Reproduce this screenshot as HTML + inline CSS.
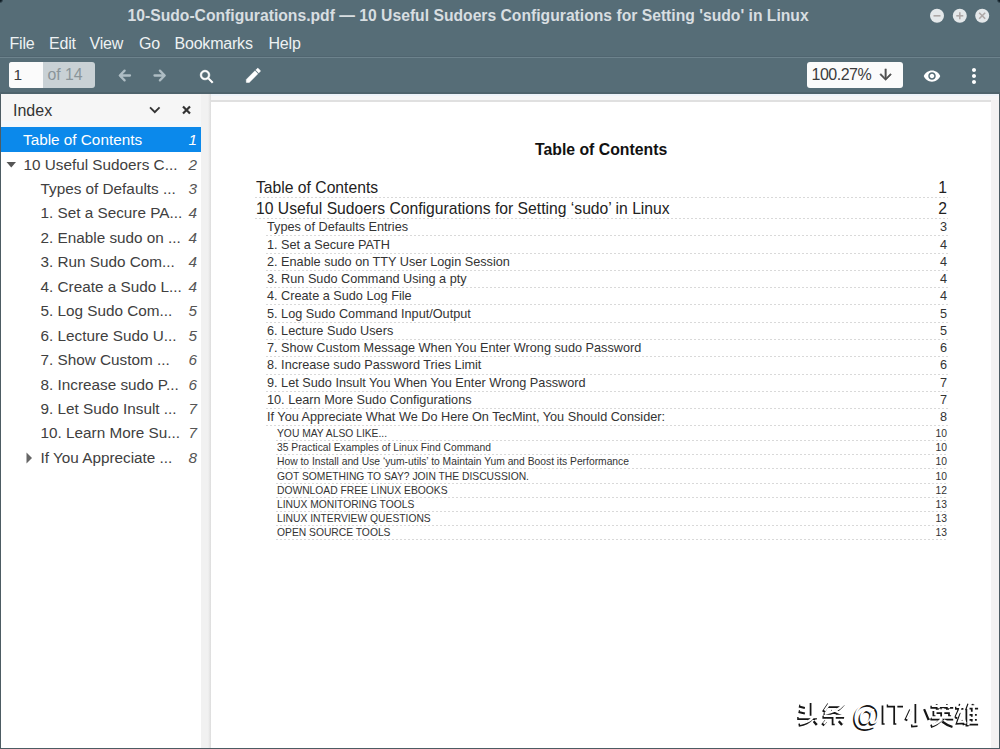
<!DOCTYPE html>
<html><head><meta charset="utf-8"><style>
*{margin:0;padding:0;box-sizing:border-box}
html,body{width:1000px;height:749px;overflow:hidden;background:#566d77}
body{position:relative;font-family:"Liberation Sans",sans-serif}
.a{position:absolute}
.l{position:absolute;white-space:nowrap;line-height:1}
.l.r{width:200px;text-align:right}
.dots{position:absolute;height:1px;background-image:linear-gradient(to right,#d9d9d9 50%,transparent 50%);background-size:4px 1px}
svg{position:absolute;overflow:visible}
</style></head><body>
<div class="a" style="left:0;top:0;width:1000px;height:94px;background:#566d77"></div>
<div class="a" style="left:0;top:56px;width:1000px;height:1px;background:#506570"></div>
<div class="a" style="left:0;top:57px;width:1000px;height:1px;background:#6d838d"></div>
<div class="a" style="left:0;top:92px;width:1000px;height:2px;background:#4e636c"></div>
<div class="l" style="left:127.5px;top:8.01px;font-size:15.7px;color:#d8dee1;font-weight:bold">10-Sudo-Configurations.pdf — 10 Useful Sudoers Configurations for Setting 'sudo' in Linux</div>
<svg style="left:0;top:0" width="1000" height="30"><circle cx="937" cy="15.8" r="7" fill="#e4e8ea"/><line x1="933.5" y1="15.8" x2="940.5" y2="15.8" stroke="#aea8a7" stroke-width="1.6"/><circle cx="959.8" cy="15.8" r="7" fill="#e4e8ea"/><line x1="956.3" y1="15.8" x2="963.3" y2="15.8" stroke="#aea8a7" stroke-width="1.6"/><line x1="959.8" y1="12.3" x2="959.8" y2="19.3" stroke="#aea8a7" stroke-width="1.6"/><circle cx="982.2" cy="15.8" r="7" fill="#e4e8ea"/><line x1="979.2" y1="12.8" x2="985.2" y2="18.8" stroke="#aea8a7" stroke-width="1.6"/><line x1="979.2" y1="18.8" x2="985.2" y2="12.8" stroke="#aea8a7" stroke-width="1.6"/></svg>
<div class="l" style="left:9.5px;top:36.36px;font-size:16px;color:#eef2f3;letter-spacing:-0.2px">File</div>
<div class="l" style="left:49px;top:36.36px;font-size:16px;color:#eef2f3;letter-spacing:-0.2px">Edit</div>
<div class="l" style="left:89.5px;top:36.36px;font-size:16px;color:#eef2f3;letter-spacing:-0.2px">View</div>
<div class="l" style="left:139px;top:36.36px;font-size:16px;color:#eef2f3;letter-spacing:-0.2px">Go</div>
<div class="l" style="left:174.5px;top:36.36px;font-size:16px;color:#eef2f3;letter-spacing:-0.2px">Bookmarks</div>
<div class="l" style="left:268.5px;top:36.36px;font-size:16px;color:#eef2f3;letter-spacing:-0.2px">Help</div>
<div class="a" style="left:9px;top:62px;width:86px;height:26px;border-radius:3px;background:#c9d1d5;overflow:hidden"><div class="a" style="left:0;top:0;width:34px;height:26px;background:#fbfbfb"></div></div>
<div class="l" style="left:13.5px;top:66.88px;font-size:15.5px;color:#3a3a3a;">1</div>
<div class="l" style="left:47.5px;top:66.63px;font-size:15.8px;color:#8a959a;">of 14</div>
<svg style="left:0;top:0" width="300" height="94"><path d="M120 75.5 L130 75.5 M124.6 70.6 L119.8 75.5 L124.6 80.4 M154.5 75.5 L164.5 75.5 M159.9 70.6 L164.7 75.5 L159.9 80.4" stroke="#aebdc4" stroke-width="2.3" fill="none" stroke-linecap="round" stroke-linejoin="round"/></svg>
<svg style="left:198.1px;top:67.56px" width="17.759999999999998" height="17.759999999999998" viewBox="0 0 24 24"><path d="M15.5 14h-.79l-.28-.27C15.41 12.59 16 11.11 16 9.5 16 5.91 13.09 3 9.5 3S3 5.91 3 9.5 5.91 16 9.5 16c1.61 0 3.09-.59 4.23-1.57l.27.28v.79l5 4.99L20.49 19l-4.99-5zm-6 0C7.01 14 5 11.99 5 9.5S7.01 5 9.5 5 14 7.01 14 9.5 11.99 14 9.5 14z" fill="#ffffff" stroke="#ffffff" stroke-width="0.9" stroke-linejoin="round"/></svg>
<svg style="left:244.4px;top:65.9px" width="18.72" height="18.72" viewBox="0 0 24 24"><path d="M3 17.25V21h3.75L17.81 9.94l-3.75-3.75L3 17.25zM20.71 7.04c.39-.39.39-1.02 0-1.41l-2.34-2.34c-.39-.39-1.02-.39-1.41 0l-1.83 1.83 3.75 3.75 1.83-1.83z" fill="#ffffff" stroke="#ffffff" stroke-width="0.7" stroke-linejoin="round"/></svg>
<div class="a" style="left:807px;top:62px;width:96px;height:26px;border-radius:3px;background:#fbfbfb"></div>
<div class="l" style="left:811.5px;top:67.46px;font-size:16px;color:#3c3c3c;letter-spacing:-0.5px">100.27%</div>
<svg style="left:876.6px;top:65.6px" width="17.28" height="17.28" viewBox="0 0 24 24"><path d="M20 12l-1.41-1.41L13 16.17V4h-2v12.17l-5.58-5.59L4 12l8 8 8-8z" fill="#505050" stroke="#505050" stroke-width="0.7" stroke-linejoin="round"/></svg>
<svg style="left:923.3px;top:66.5px" width="18.0" height="18.0" viewBox="0 0 24 24"><path d="M12 4.5C7 4.5 2.73 7.61 1 12c1.73 4.39 6 7.5 11 7.5s9.27-3.11 11-7.5c-1.73-4.39-6-7.5-11-7.5zM12 17c-2.76 0-5-2.24-5-5s2.24-5 5-5 5 2.24 5 5-2.24 5-5 5zm0-8c-1.66 0-3 1.34-3 3s1.34 3 3 3 3-1.34 3-3-1.34-3-3-3z" fill="#ffffff"/></svg>
<svg style="left:961.5px;top:63.5px" width="24.0" height="24.0" viewBox="0 0 24 24"><path d="M12 8c1.1 0 2-.9 2-2s-.9-2-2-2-2 .9-2 2 .9 2 2 2zm0 2c-1.1 0-2 .9-2 2s.9 2 2 2 2-.9 2-2-.9-2-2-2zm0 6c-1.1 0-2 .9-2 2s.9 2 2 2 2-.9 2-2-.9-2-2-2z" fill="#ffffff"/></svg>
<div class="a" style="left:201px;top:94px;width:798px;height:655px;background:#f6f6f7"></div>
<div class="a" style="left:201px;top:94px;width:798px;height:2px;background:#eef3f9"></div>
<div class="a" style="left:209px;top:100px;width:782px;height:660px;background:#e0e0e0"></div>
<div class="a" style="left:211px;top:102px;width:780px;height:660px;background:#fff"></div>
<div class="a" style="left:991px;top:100px;width:8px;height:649px;background:#f4f2f2"></div>
<div class="l" style="left:535px;top:142.43px;font-size:15.8px;color:#111;font-weight:bold">Table of Contents</div>
<div class="l" style="left:256px;top:179.71px;font-size:15.7px;color:#222;">Table of Contents</div>
<div class="l r" style="left:747px;top:179.71px;font-size:15.7px;color:#222;">1</div>
<div class="dots" style="left:255px;top:197px;width:693px"></div>
<div class="l" style="left:256px;top:200.91px;font-size:15.7px;color:#222;">10 Useful Sudoers Configurations for Setting ‘sudo’ in Linux</div>
<div class="l r" style="left:747px;top:200.91px;font-size:15.7px;color:#222;">2</div>
<div class="dots" style="left:255px;top:218px;width:693px"></div>
<div class="l" style="left:267px;top:221.25px;font-size:12.7px;color:#333;">Types of Defaults Entries</div>
<div class="l r" style="left:747px;top:221.25px;font-size:12.7px;color:#333;">3</div>
<div class="dots" style="left:266px;top:235px;width:682px"></div>
<div class="l" style="left:267px;top:238.52px;font-size:12.7px;color:#333;">1. Set a Secure PATH</div>
<div class="l r" style="left:747px;top:238.52px;font-size:12.7px;color:#333;">4</div>
<div class="dots" style="left:266px;top:253px;width:682px"></div>
<div class="l" style="left:267px;top:255.79px;font-size:12.7px;color:#333;">2. Enable sudo on TTY User Login Session</div>
<div class="l r" style="left:747px;top:255.79px;font-size:12.7px;color:#333;">4</div>
<div class="dots" style="left:266px;top:270px;width:682px"></div>
<div class="l" style="left:267px;top:273.06px;font-size:12.7px;color:#333;">3. Run Sudo Command Using a pty</div>
<div class="l r" style="left:747px;top:273.06px;font-size:12.7px;color:#333;">4</div>
<div class="dots" style="left:266px;top:287px;width:682px"></div>
<div class="l" style="left:267px;top:290.33px;font-size:12.7px;color:#333;">4. Create a Sudo Log File</div>
<div class="l r" style="left:747px;top:290.33px;font-size:12.7px;color:#333;">4</div>
<div class="dots" style="left:266px;top:304px;width:682px"></div>
<div class="l" style="left:267px;top:307.60px;font-size:12.7px;color:#333;">5. Log Sudo Command Input/Output</div>
<div class="l r" style="left:747px;top:307.60px;font-size:12.7px;color:#333;">5</div>
<div class="dots" style="left:266px;top:322px;width:682px"></div>
<div class="l" style="left:267px;top:324.87px;font-size:12.7px;color:#333;">6. Lecture Sudo Users</div>
<div class="l r" style="left:747px;top:324.87px;font-size:12.7px;color:#333;">5</div>
<div class="dots" style="left:266px;top:339px;width:682px"></div>
<div class="l" style="left:267px;top:342.14px;font-size:12.7px;color:#333;">7. Show Custom Message When You Enter Wrong sudo Password</div>
<div class="l r" style="left:747px;top:342.14px;font-size:12.7px;color:#333;">6</div>
<div class="dots" style="left:266px;top:356px;width:682px"></div>
<div class="l" style="left:267px;top:359.41px;font-size:12.7px;color:#333;">8. Increase sudo Password Tries Limit</div>
<div class="l r" style="left:747px;top:359.41px;font-size:12.7px;color:#333;">6</div>
<div class="dots" style="left:266px;top:374px;width:682px"></div>
<div class="l" style="left:267px;top:376.68px;font-size:12.7px;color:#333;">9. Let Sudo Insult You When You Enter Wrong Password</div>
<div class="l r" style="left:747px;top:376.68px;font-size:12.7px;color:#333;">7</div>
<div class="dots" style="left:266px;top:391px;width:682px"></div>
<div class="l" style="left:267px;top:393.95px;font-size:12.7px;color:#333;">10. Learn More Sudo Configurations</div>
<div class="l r" style="left:747px;top:393.95px;font-size:12.7px;color:#333;">7</div>
<div class="dots" style="left:266px;top:408px;width:682px"></div>
<div class="l" style="left:267px;top:411.22px;font-size:12.7px;color:#333;">If You Appreciate What We Do Here On TecMint, You Should Consider:</div>
<div class="l r" style="left:747px;top:411.22px;font-size:12.7px;color:#333;">8</div>
<div class="dots" style="left:266px;top:425px;width:682px"></div>
<div class="l" style="left:277px;top:428.98px;font-size:10.3px;color:#333;">YOU MAY ALSO LIKE...</div>
<div class="l r" style="left:747px;top:428.98px;font-size:10.3px;color:#333;">10</div>
<div class="dots" style="left:276px;top:440px;width:672px"></div>
<div class="l" style="left:277px;top:443.18px;font-size:10.3px;color:#333;">35 Practical Examples of Linux Find Command</div>
<div class="l r" style="left:747px;top:443.18px;font-size:10.3px;color:#333;">10</div>
<div class="dots" style="left:276px;top:454px;width:672px"></div>
<div class="l" style="left:277px;top:457.38px;font-size:10.3px;color:#333;">How to Install and Use ‘yum-utils’ to Maintain Yum and Boost its Performance</div>
<div class="l r" style="left:747px;top:457.38px;font-size:10.3px;color:#333;">10</div>
<div class="dots" style="left:276px;top:468px;width:672px"></div>
<div class="l" style="left:277px;top:471.58px;font-size:10.3px;color:#333;">GOT SOMETHING TO SAY? JOIN THE DISCUSSION.</div>
<div class="l r" style="left:747px;top:471.58px;font-size:10.3px;color:#333;">10</div>
<div class="dots" style="left:276px;top:483px;width:672px"></div>
<div class="l" style="left:277px;top:485.78px;font-size:10.3px;color:#333;">DOWNLOAD FREE LINUX EBOOKS</div>
<div class="l r" style="left:747px;top:485.78px;font-size:10.3px;color:#333;">12</div>
<div class="dots" style="left:276px;top:497px;width:672px"></div>
<div class="l" style="left:277px;top:499.98px;font-size:10.3px;color:#333;">LINUX MONITORING TOOLS</div>
<div class="l r" style="left:747px;top:499.98px;font-size:10.3px;color:#333;">13</div>
<div class="dots" style="left:276px;top:511px;width:672px"></div>
<div class="l" style="left:277px;top:514.18px;font-size:10.3px;color:#333;">LINUX INTERVIEW QUESTIONS</div>
<div class="l r" style="left:747px;top:514.18px;font-size:10.3px;color:#333;">13</div>
<div class="dots" style="left:276px;top:525px;width:672px"></div>
<div class="l" style="left:277px;top:528.38px;font-size:10.3px;color:#333;">OPEN SOURCE TOOLS</div>
<div class="l r" style="left:747px;top:528.38px;font-size:10.3px;color:#333;">13</div>
<div class="dots" style="left:276px;top:539px;width:672px"></div>
<div class="a" style="left:1px;top:94px;width:200px;height:654px;background:#fff"></div>
<div class="a" style="left:1px;top:94px;width:200px;height:27px;background:#f6f6f6"></div>
<div class="a" style="left:1px;top:121px;width:200px;height:6px;background:#f3f8fb"></div>
<div class="a" style="left:201px;top:94px;width:10px;height:654px;background:linear-gradient(to right,#f1f1f1 0,#f1f1f1 70%,#dcdcdc 100%)"></div>
<div class="l" style="left:13px;top:102.66px;font-size:16px;color:#333;">Index</div>
<svg style="left:143.8px;top:98.5px" width="21.6" height="21.6" viewBox="0 0 24 24"><path d="M16.59 8.59L12 13.17 7.41 8.59 6 10l6 6 6-6z" fill="#333"/></svg>
<svg style="left:0;top:0" width="200" height="130"><path d="M183 106.5 L190 113.5 M190 106.5 L183 113.5" stroke="#333" stroke-width="2.2" fill="none"/></svg>
<div class="a" style="left:1px;top:127px;width:200px;height:24.7px;background:#0b89eb"></div>
<div class="l" style="left:23px;top:132.05px;font-size:15.3px;color:#ffffff;">Table of Contents</div>
<div class="l r" style="left:-3px;top:132.05px;font-size:15.3px;color:#ffffff;font-style:italic">1</div>
<div class="l" style="left:23.5px;top:156.50px;font-size:15.3px;color:#404040;">10 Useful Sudoers C...</div>
<div class="l r" style="left:-3px;top:156.50px;font-size:15.3px;color:#555555;font-style:italic">2</div>
<div class="l" style="left:40.5px;top:180.95px;font-size:15.3px;color:#404040;">Types of Defaults ...</div>
<div class="l r" style="left:-3px;top:180.95px;font-size:15.3px;color:#555555;font-style:italic">3</div>
<div class="l" style="left:40.5px;top:205.40px;font-size:15.3px;color:#404040;">1. Set a Secure PA...</div>
<div class="l r" style="left:-3px;top:205.40px;font-size:15.3px;color:#555555;font-style:italic">4</div>
<div class="l" style="left:40.5px;top:229.85px;font-size:15.3px;color:#404040;">2. Enable sudo on ...</div>
<div class="l r" style="left:-3px;top:229.85px;font-size:15.3px;color:#555555;font-style:italic">4</div>
<div class="l" style="left:40.5px;top:254.30px;font-size:15.3px;color:#404040;">3. Run Sudo Com...</div>
<div class="l r" style="left:-3px;top:254.30px;font-size:15.3px;color:#555555;font-style:italic">4</div>
<div class="l" style="left:40.5px;top:278.75px;font-size:15.3px;color:#404040;">4. Create a Sudo L...</div>
<div class="l r" style="left:-3px;top:278.75px;font-size:15.3px;color:#555555;font-style:italic">4</div>
<div class="l" style="left:40.5px;top:303.20px;font-size:15.3px;color:#404040;">5. Log Sudo Com...</div>
<div class="l r" style="left:-3px;top:303.20px;font-size:15.3px;color:#555555;font-style:italic">5</div>
<div class="l" style="left:40.5px;top:327.65px;font-size:15.3px;color:#404040;">6. Lecture Sudo U...</div>
<div class="l r" style="left:-3px;top:327.65px;font-size:15.3px;color:#555555;font-style:italic">5</div>
<div class="l" style="left:40.5px;top:352.10px;font-size:15.3px;color:#404040;">7. Show Custom ...</div>
<div class="l r" style="left:-3px;top:352.10px;font-size:15.3px;color:#555555;font-style:italic">6</div>
<div class="l" style="left:40.5px;top:376.55px;font-size:15.3px;color:#404040;">8. Increase sudo P...</div>
<div class="l r" style="left:-3px;top:376.55px;font-size:15.3px;color:#555555;font-style:italic">6</div>
<div class="l" style="left:40.5px;top:401.00px;font-size:15.3px;color:#404040;">9. Let Sudo Insult ...</div>
<div class="l r" style="left:-3px;top:401.00px;font-size:15.3px;color:#555555;font-style:italic">7</div>
<div class="l" style="left:40.5px;top:425.45px;font-size:15.3px;color:#404040;">10. Learn More Su...</div>
<div class="l r" style="left:-3px;top:425.45px;font-size:15.3px;color:#555555;font-style:italic">7</div>
<div class="l" style="left:40.5px;top:449.90px;font-size:15.3px;color:#404040;">If You Appreciate ...</div>
<div class="l r" style="left:-3px;top:449.90px;font-size:15.3px;color:#555555;font-style:italic">8</div>
<svg style="left:0;top:0" width="200" height="500"><path d="M6.5 162 L16 162 L11.25 167.5 Z" fill="#555"/><path d="M26.5 452.5 L32 458 L26.5 463.5 Z" fill="#666"/></svg>
<div class="a" style="left:0;top:0;width:4px;height:4px;background:radial-gradient(circle at 0 0,#0d1a22 0,#0d1a22 1.2px,rgba(86,109,119,0) 3.5px)"></div>
<div class="a" style="left:996px;top:0;width:4px;height:4px;background:radial-gradient(circle at 100% 0,#0d1a22 0,#0d1a22 1.2px,rgba(86,109,119,0) 3.5px)"></div>
<div class="a" style="left:0;top:94px;width:1px;height:655px;background:#4d5c63"></div>
<div class="a" style="left:0;top:748px;width:1000px;height:1px;background:#4d5c63"></div>
<div class="a" style="left:999px;top:94px;width:1px;height:655px;background:#4d5c63"></div>
<svg style="left:0;top:0" width="1000" height="749"><path d="M799 706 L805 707.5 M798.6 711.5 L805 713 M811.2 703 L811.2 717.5 M797.2 718.4 L817 718.4 M811.2 719.3 Q808 723.5 798.6 725.2 M813.9 721.1 L817 724.7 M828.7 704 L823.3 712.1 M827.8 706.5 L841.5 706.5 Q836 713 823.5 715 M831 711 Q837 714.5 844.5 716 M822.4 717.3 L844 717.3 M833.2 715.7 L833.2 725.2 M826 721 L822.4 725.2 M839 721 L842.3 724.7 M910.6 709.9 L905.6 720.7 M916 704 L916 725.6 L911 726.1 M924.5 709 L929 719.8 M930.4 707.3 L953.2 707.3 M937.3 704 L937.3 709.7 M947.5 704 L947.5 709.7 M934 716.6 L934 712.6 L949.6 712.6 L949.6 716.6 M941.8 709.7 L941.8 719 M930.4 719 L953.2 719 M940.6 720.2 Q937 724.5 930.7 726.5 M942.4 721.4 Q946 724.5 952.6 726.5 M955 708.2 L963.4 708.2 M960.4 704 Q959 712 955.3 718.4 M961 713 L957.4 723.2 L963.4 722.8 M962.2 720.2 L964.3 725 M968.8 704 L966.4 710.6 M967 709.4 L967 726.5 M972.4 704 L973.6 705.8 M967 707.9 L978.1 707.9 M967 714.2 L976.8 714.2 M967 719.3 L976.8 719.3 M967 724.1 L978.1 724.1 M972.4 707.9 L972.4 724.1 M883.1 705.4 L883.1 724.7 M886.7 706 L903 706 M894.8 706 L894.8 724.7" fill="none" stroke="#161616" stroke-width="3" stroke-linecap="butt"/><path d="M799 706 L805 707.5 M798.6 711.5 L805 713 M811.2 703 L811.2 717.5 M797.2 718.4 L817 718.4 M811.2 719.3 Q808 723.5 798.6 725.2 M813.9 721.1 L817 724.7 M828.7 704 L823.3 712.1 M827.8 706.5 L841.5 706.5 Q836 713 823.5 715 M831 711 Q837 714.5 844.5 716 M822.4 717.3 L844 717.3 M833.2 715.7 L833.2 725.2 M826 721 L822.4 725.2 M839 721 L842.3 724.7 M910.6 709.9 L905.6 720.7 M916 704 L916 725.6 L911 726.1 M924.5 709 L929 719.8 M930.4 707.3 L953.2 707.3 M937.3 704 L937.3 709.7 M947.5 704 L947.5 709.7 M934 716.6 L934 712.6 L949.6 712.6 L949.6 716.6 M941.8 709.7 L941.8 719 M930.4 719 L953.2 719 M940.6 720.2 Q937 724.5 930.7 726.5 M942.4 721.4 Q946 724.5 952.6 726.5 M955 708.2 L963.4 708.2 M960.4 704 Q959 712 955.3 718.4 M961 713 L957.4 723.2 L963.4 722.8 M962.2 720.2 L964.3 725 M968.8 704 L966.4 710.6 M967 709.4 L967 726.5 M972.4 704 L973.6 705.8 M967 707.9 L978.1 707.9 M967 714.2 L976.8 714.2 M967 719.3 L976.8 719.3 M967 724.1 L978.1 724.1 M972.4 707.9 L972.4 724.1 M883.1 705.4 L883.1 724.7 M886.7 706 L903 706 M894.8 706 L894.8 724.7" fill="none" stroke="#fff" stroke-width="2.3" stroke-linecap="butt" transform="translate(1.4,-1.4)"/></svg>
<div class="l" style="left:852.3px;top:700.95px;font-size:29px;color:#ffffff;text-shadow:-1.5px 1.5px 0 #161616">@</div>
</body></html>
